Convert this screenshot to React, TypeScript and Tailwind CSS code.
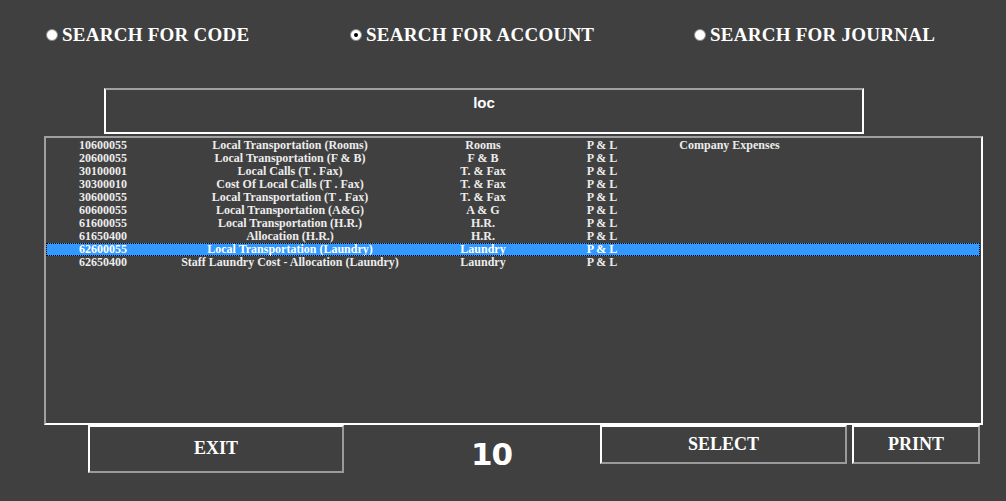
import React from 'react';

type Row = {
  code: string;
  name: string;
  dept: string;
  type: string;
  group?: string;
};

const rows: Row[] = [
  { code: '10600055', name: 'Local Transportation (Rooms)', dept: 'Rooms', type: 'P & L', group: 'Company Expenses' },
  { code: '20600055', name: 'Local Transportation (F & B)', dept: 'F & B', type: 'P & L' },
  { code: '30100001', name: 'Local Calls (T . Fax)', dept: 'T. & Fax', type: 'P & L' },
  { code: '30300010', name: 'Cost Of Local Calls (T . Fax)', dept: 'T. & Fax', type: 'P & L' },
  { code: '30600055', name: 'Local Transportation (T . Fax)', dept: 'T. & Fax', type: 'P & L' },
  { code: '60600055', name: 'Local Transportation (A&G)', dept: 'A & G', type: 'P & L' },
  { code: '61600055', name: 'Local Transportation (H.R.)', dept: 'H.R.', type: 'P & L' },
  { code: '61650400', name: 'Allocation (H.R.)', dept: 'H.R.', type: 'P & L' },
  { code: '62600055', name: 'Local Transportation (Laundry)', dept: 'Laundry', type: 'P & L' },
  { code: '62650400', name: 'Staff Laundry Cost - Allocation (Laundry)', dept: 'Laundry', type: 'P & L' },
];

const serif = "font-['Liberation_Serif','Times_New_Roman',serif]";

const Radio = ({ label, checked = false, width }: { label: string; checked?: boolean; width: string }) => (
  <div className={`flex items-center gap-[4px] ${width}`}>
    <span className="w-[12px] h-[12px] rounded-full bg-white border border-[#8a8a8a] flex items-center justify-center shrink-0">
      {checked && <span className="w-[4px] h-[4px] rounded-full bg-black" />}
    </span>
    <span className={`${serif} text-[19px] leading-[18px] font-bold text-white whitespace-nowrap tracking-[0.25px]`}>
      {label}
    </span>
  </div>
);

const ListRow = ({ row, selected }: { row: Row; selected: boolean }) => (
  <div
    className={`flex h-[13px] items-center ${serif} text-[12px] leading-[13px] font-bold whitespace-nowrap ${
      selected ? 'bg-[#3399ff] text-white outline-1 outline-dotted outline-black -outline-offset-1 mr-[1px]' : 'text-[#ececec]'
    }`}
  >
    <div className="w-[114px] text-center">{row.code}</div>
    <div className="w-[260px] text-center">{row.name}</div>
    <div className="w-[126px] text-center">{row.dept}</div>
    <div className="w-[112px] text-center">{row.type}</div>
    <div className="w-[143px] text-center">{row.group ?? ''}</div>
  </div>
);

export default function App() {
  const selectedIndex = 8;

  return (
    <div className="w-[1006px] h-[501px] bg-[#404040] overflow-hidden">
      <div className="flex pt-[26px] pl-[46px] h-[44px]">
        <Radio label="SEARCH FOR CODE" width="w-[304px]" />
        <Radio label="SEARCH FOR ACCOUNT" checked width="w-[344px]" />
        <Radio label="SEARCH FOR JOURNAL" width="w-[300px]" />
      </div>

      <div className="mt-[44px] ml-[104px] w-[760px] h-[46px] border-2 border-white border-t-[#a0a0a0] flex justify-center pt-[4px]">
        <span className="font-['Liberation_Sans_Narrow','Liberation_Sans',sans-serif] font-bold text-[15px] leading-[18px] text-white">
          loc
        </span>
      </div>

      <div className="mt-[2px] ml-[44px] w-[939px] h-[289px] border-2 border-white border-t-[#a0a0a0] border-l-[#a0a0a0] pt-[1px]">
        {rows.map((row, i) => (
          <ListRow key={row.code} row={row} selected={i === selectedIndex} />
        ))}
      </div>

      <div className="flex">
        <button className="ml-[88px] w-[256px] h-[48px] border-2 border-white border-r-[#9a9a9a] border-b-[#9a9a9a] flex justify-center pt-[12px]">
          <span className={`${serif} font-bold text-[18px] leading-[18px] text-white`}>EXIT</span>
        </button>
        <div className="w-[256px] pl-[127px] pt-[12px]">
          <span className="font-['DejaVu_Sans',sans-serif] font-bold text-[31px] leading-[34px] text-white tracking-[-1px]">10</span>
        </div>
        <button className="w-[247px] h-[39px] border-2 border-white border-r-[#9a9a9a] border-b-[#9a9a9a] flex justify-center pt-[8px]">
          <span className={`${serif} font-bold text-[18px] leading-[18px] text-white`}>SELECT</span>
        </button>
        <button className="ml-[5px] w-[128px] h-[39px] border-2 border-white border-r-[#9a9a9a] border-b-[#9a9a9a] flex justify-center pt-[8px]">
          <span className={`${serif} font-bold text-[18px] leading-[18px] text-white`}>PRINT</span>
        </button>
      </div>
    </div>
  );
}
